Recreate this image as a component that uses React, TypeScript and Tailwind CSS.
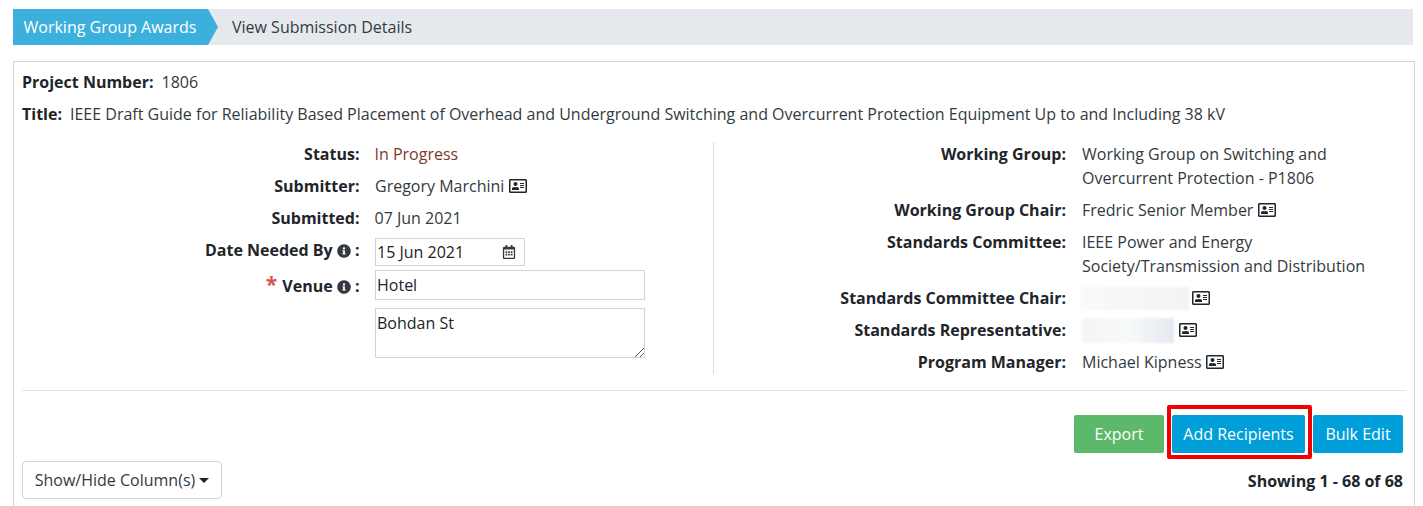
import type { ReactNode } from 'react';
import { FaInfoCircle, FaRegAddressCard, FaRegCalendarAlt } from 'react-icons/fa';

const LEFT_LABEL = 'w-[337.5px] shrink-0 text-right font-bold text-[#212529]';
const RIGHT_LABEL = 'w-[352px] shrink-0 text-right font-bold text-[#212529]';

function Card() {
  return <FaRegAddressCard className="inline-block text-[18px] text-[#212529] align-[-3px]" />;
}

function Info() {
  return <FaInfoCircle className="inline-block text-[14px] text-[#343a40] align-[-2px]" />;
}

function RightRow({ label, children, className }: { label: string; children: ReactNode; className?: string }) {
  return (
    <div className={`flex ${className ?? ''}`}>
      <div className={RIGHT_LABEL}>{label}:</div>
      <div className="ml-[16px] w-[300px] text-[#343a40]">{children}</div>
    </div>
  );
}

export default function App() {
  return (
    <div className="h-[506px] overflow-hidden bg-white text-[16px] leading-[24px] text-[#343a40] font-['Open_Sans',sans-serif] relative">
      <div className="pt-[9px] pl-[13px] pr-[10px]">
        {/* Breadcrumb */}
        <div className="flex h-[36px] items-center bg-[#e5e8ed]">
          <div className="flex h-full w-[195px] items-center bg-[#3cb0dc] pl-[10.5px] text-white whitespace-nowrap">
            Working Group Awards
          </div>
          <div className="h-full w-[10px] bg-[#3cb0dc] [clip-path:polygon(0_0,100%_50%,0_100%)]" />
          <div className="ml-[14px] -mt-[1px] text-[#343a40]">View Submission Details</div>
        </div>
      </div>

      <div className="mt-[16px] ml-[13px] mr-[8px] h-[460px] border border-[#d5d5d5] px-[8px] pt-[8px]">
        <div className="leading-[24px]">
          <span className="font-bold text-[#212529]">Project Number:</span>
          <span className="ml-[8px]">1806</span>
        </div>
        <div className="mt-[8px] whitespace-nowrap">
          <span className="font-bold text-[#212529]">Title:</span>
          <span className="ml-[8px]">
            IEEE Draft Guide for Reliability Based Placement of Overhead and Underground Switching and Overcurrent
            Protection Equipment Up to and Including 38 kV
          </span>
        </div>

        <div className="mt-[16px] flex pb-[16px] border-b border-[#e4e4e4]">
          {/* Left column */}
          <div className="w-[692px] shrink-0 border-r border-[#dcdcdc] h-[232px]">
            <div className="flex h-[24px]">
              <div className={LEFT_LABEL}>Status:</div>
              <div className="ml-[15px] text-[#7b3a2a]">In Progress</div>
            </div>
            <div className="flex h-[24px] mt-[8px]">
              <div className={LEFT_LABEL}>Submitter:</div>
              <div className="ml-[15.5px]">
                Gregory Marchini <Card />
              </div>
            </div>
            <div className="flex h-[24px] mt-[8px]">
              <div className={LEFT_LABEL}>Submitted:</div>
              <div className="ml-[15px]">07 Jun 2021</div>
            </div>
            <div className="flex mt-[8px] h-[24px]">
              <div className={LEFT_LABEL}>
                Date Needed By <Info /> :
              </div>
              <div className="ml-[15.5px] flex h-[28px] w-[150px] items-center justify-between border border-[#ced4da] pl-[1px] pr-[8px] text-[#212529]">
                <span>15 Jun 2021</span>
                <FaRegCalendarAlt className="text-[14px] text-[#343a40]" />
              </div>
            </div>
            <div className="flex mt-[8px]">
              <div className={`${LEFT_LABEL} pt-[4px]`}>
                <span className="mr-[5px] text-[21px] leading-[0] font-bold text-[#d9534f]">*</span>Venue <Info /> :
              </div>
              <div className="ml-[15.5px] flex flex-col">
                <div className="h-[30px] w-[270px] border border-[#ced4da] pl-[1px] leading-[28px] text-[#212529]">
                  Hotel
                </div>
                <div className="relative mt-[8px] h-[50px] w-[270px] border border-[#ced4da] pl-[1px] leading-[28px] text-[#212529]">
                  Bohdan St
                  <svg viewBox="0 0 10 10" className="absolute right-0 bottom-0 h-[10px] w-[10px]" stroke="#555" strokeWidth="1">
                    <path d="M1 10 10 1M6 10l4-4" />
                  </svg>
                </div>
              </div>
            </div>
          </div>

          {/* Right column */}
          <div className="flex-1">
            <RightRow label="Working Group">
              Working Group on Switching and
              <br />
              Overcurrent Protection - P1806
            </RightRow>
            <RightRow label="Working Group Chair" className="mt-[8px]">
              Fredric Senior Member <Card />
            </RightRow>
            <RightRow label="Standards Committee" className="mt-[8px]">
              IEEE Power and Energy
              <br />
              Society/Transmission and Distribution
            </RightRow>
            <RightRow label="Standards Committee Chair" className="mt-[8px]">
              <div className="flex h-[24px] items-center">
                <div className="-ml-[2px] h-[23px] w-[109px] bg-gradient-to-r from-[#fafafa] to-[#f3f3f3] blur-[1px]" />
                <span className="ml-[3px] flex">
                  <Card />
                </span>
              </div>
            </RightRow>
            <RightRow label="Standards Representative" className="mt-[8px]">
              <div className="flex h-[24px] items-center">
                <div className="h-[25px] w-[92px] bg-gradient-to-r from-[#f4f5f7] via-[#f8fafa] to-[#e4e9f0] blur-[1px]" />
                <span className="ml-[5px] flex">
                  <Card />
                </span>
              </div>
            </RightRow>
            <RightRow label="Program Manager" className="mt-[8px]">
              Michael Kipness <Card />
            </RightRow>
          </div>
        </div>

        {/* Toolbar */}
        <div className="relative flex items-start justify-between">
          <button className="mt-[70px] flex h-[38px] w-[200px] items-center justify-center rounded-[4px] border border-[#ced4da] text-[#343a40]">
            Show/Hide Column(s)
            <span className="ml-[4px] h-0 w-0 border-x-[5px] border-t-[5px] border-x-transparent border-t-[#212529]" />
          </button>
          <div className="mr-[3px] mt-[24px] flex flex-col items-end">
            <div className="flex gap-[8px]">
              <button className="h-[38px] w-[90px] rounded-[2px] bg-[#5cb96b] text-white">Export</button>
              <button className="h-[38px] w-[133px] rounded-[2px] bg-[#009fda] text-white">Add Recipients</button>
              <button className="h-[38px] w-[90px] rounded-[2px] bg-[#009fda] text-white">Bulk Edit</button>
            </div>
            <div className="mt-[16px] font-bold text-[#212529]">Showing 1 - 68 of 68</div>
          </div>
        </div>
      </div>

      {/* Red annotation box over the button */}
      <div className="absolute left-[1167px] top-[405px] h-[54px] w-[145px] rounded-[2px] border-[4px] border-[#f00000]" />
    </div>
  );
}
